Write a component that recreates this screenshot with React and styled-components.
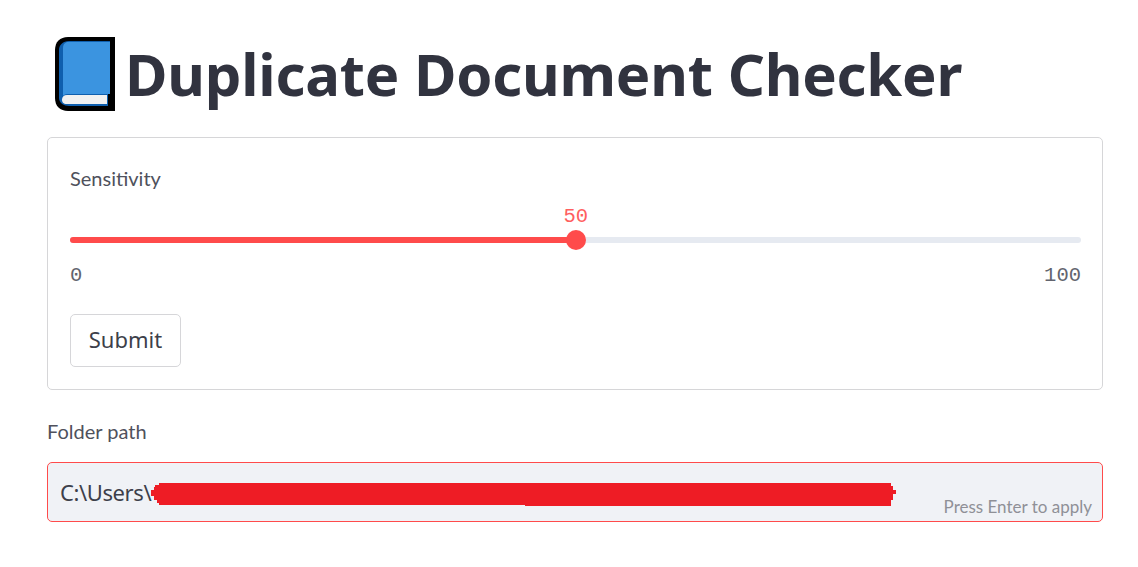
import { createGlobalStyle, styled } from "styled-components";

const GlobalStyle = createGlobalStyle`
  html, body {
    margin: 0;
    padding: 0;
    background: #fff;
    font-family: "Lato", "Noto Sans", sans-serif;
  }
`;

function BookIcon() {
  return (
    <svg width="62" height="76" viewBox="0 0 62 76">
      <path d="M61 1H14C6 1 1 6 1 14V62C1 70 6 75 14 75H61Z" fill="#000" />
      <path d="M56 5H15C9 5 5 9 5 14V62C5 67 10 70 15 70H54V58H56Z" fill="#0f5fae" />
      <path d="M13 6H56V58H13C11 58 10 59 9 60L9 12C9 9 10 7 13 6Z" fill="#3b94e0" />
      <path d="M13 59H53V68H13C9 68 8 66 8 63.5C8 61 10 59 13 59Z" fill="#f1f1f1" />
    </svg>
  );
}

function Redaction() {
  return (
    <RedactionMark width="748" height="26" viewBox="0 0 748 26">
      <path
        d="M6 4H10V2H742V5H744V9H747V13H744V19H742V25H376V24H10V22H8V19H5V15H2V9H5V6H6Z"
        fill="#ee1c25"
      />
    </RedactionMark>
  );
}

export default function App() {
  return (
    <>
      <GlobalStyle />
      <Page>
        <Title>
          <BookIcon />
          <span>Duplicate Document Checker</span>
        </Title>

        <FormCard>
          <FieldLabel>Sensitivity</FieldLabel>
          <Slider>
            <SliderValue $percent={50}>50</SliderValue>
            <Track>
              <TrackFill $percent={50} />
              <Thumb $percent={50} />
            </Track>
            <SliderEnds>
              <span>0</span>
              <span>100</span>
            </SliderEnds>
          </Slider>
          <SubmitButton type="button">Submit</SubmitButton>
        </FormCard>

        <PathLabel>Folder path</PathLabel>
        <PathInput>
          <PathText>C:\Users\</PathText>
          <Redaction />
          <InputHint>Press Enter to apply</InputHint>
        </PathInput>
      </Page>
    </>
  );
}

const Page = styled.main`
  width: 1056px;
  margin-left: 47px;
  padding-top: 30px;
  color: #31333f;
`;

const Title = styled.h1`
  display: flex;
  align-items: center;
  height: 87px;
  margin: 0 0 20px;
  padding-left: 7px;
  font-family: "Noto Sans", sans-serif;
  font-size: 58px;
  font-weight: 700;
  letter-spacing: -0.2px;
  color: #31333f;
  white-space: nowrap;

  svg {
    flex: none;
    margin-right: 9px;
  }
`;

const FormCard = styled.section`
  box-sizing: border-box;
  height: 253px;
  padding: 28px 21px 0 22px;
  border: 1px solid #d6d6d8;
  border-radius: 5px;
`;

const FieldLabel = styled.label`
  display: block;
  height: 24px;
  font-size: 20px;
  line-height: 24px;
  color: #4f515c;
`;

const Slider = styled.div`
  margin-top: 16px;
  font-family: "Liberation Mono", monospace;
`;

const SliderValue = styled.div`
  height: 22px;
  padding-left: calc(${(p) => p.$percent}% - 12px);
  font-size: 20.5px;
  line-height: 22px;
  color: #ff5f5f;
`;

const Track = styled.div`
  position: relative;
  height: 6px;
  margin-top: 9px;
  background: #e6eaf1;
  border-radius: 3px;
`;

const TrackFill = styled.div`
  width: ${(p) => p.$percent}%;
  height: 100%;
  background: #ff4b4b;
  border-radius: 3px 0 0 3px;
`;

const Thumb = styled.div`
  position: absolute;
  top: -7px;
  left: calc(${(p) => p.$percent}% - 10px);
  width: 20px;
  height: 20px;
  background: #ff4b4b;
  border-radius: 50%;
`;

const SliderEnds = styled.div`
  display: flex;
  justify-content: space-between;
  height: 22px;
  margin-top: 22px;
  font-size: 20.5px;
  line-height: 22px;
  color: #62646e;
`;

const SubmitButton = styled.button`
  display: block;
  box-sizing: border-box;
  width: 111px;
  height: 53px;
  margin-top: 27px;
  padding: 0 0 3px;
  background: #fff;
  border: 1px solid #d6d6d9;
  border-radius: 5px;
  font-family: "Noto Sans", sans-serif;
  font-size: 22px;
  color: #3d3f4a;
`;

const PathLabel = styled.label`
  display: block;
  height: 24px;
  margin-top: 29px;
  font-size: 20px;
  line-height: 24px;
  color: #4f515c;
`;

const PathInput = styled.div`
  position: relative;
  box-sizing: border-box;
  display: flex;
  align-items: center;
  height: 60px;
  margin-top: 19px;
  padding-left: 12px;
  background: #f0f2f6;
  border: 1px solid #ff4b4b;
  border-radius: 5px;
`;

const PathText = styled.span`
  font-family: "Noto Sans", sans-serif;
  font-size: 22px;
  letter-spacing: -0.4px;
  color: #3d3f4a;
`;

const RedactionMark = styled.svg`
  position: absolute;
  top: 18px;
  left: 101px;
`;

const InputHint = styled.span`
  position: absolute;
  right: 10px;
  bottom: 3px;
  font-size: 17px;
  line-height: 22px;
  color: #8f9097;
`;
